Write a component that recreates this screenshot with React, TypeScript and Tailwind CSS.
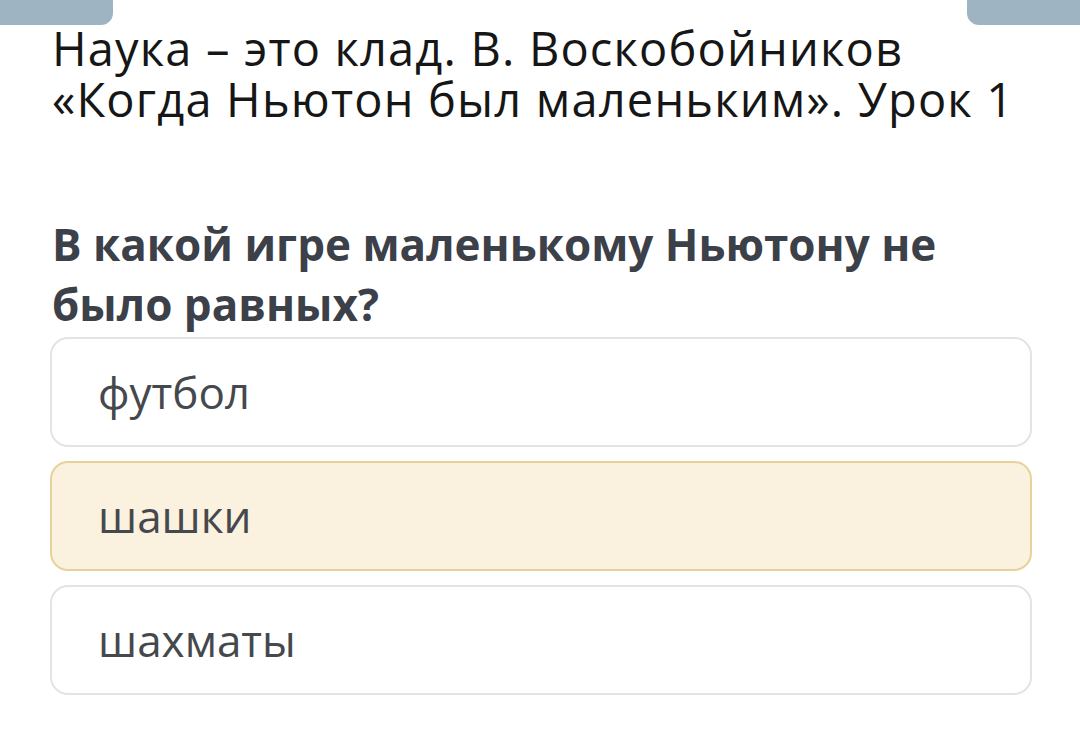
export default function App() {
  const options = [
    { text: "футбол", selected: false },
    { text: "шашки", selected: true },
    { text: "шахматы", selected: false },
  ];
  return (
    <div
      className="w-[1080px] h-[744px] bg-white overflow-hidden"
      style={{ fontFamily: '"Open Sans", "Noto Sans", sans-serif' }}
    >
      <div className="flex justify-between h-[25px]">
        <div className="w-[113px] h-[25px] bg-[#9fb4c2] rounded-br-[12px]" />
        <div className="w-[113px] h-[25px] bg-[#9fb4c2] rounded-bl-[12px]" />
      </div>
      <div className="pl-[52px] pr-[20px]">
        <h1 className="text-[47px] leading-[51px] tracking-[0.025em] text-[#161616] font-normal -mt-[2px] whitespace-nowrap">
          Наука – это клад. В. Воскобойников
          <br />
          «Когда Ньютон был маленьким». Урок 1
        </h1>
        <h2 className="mt-[89px] text-[44px] leading-[60px] font-bold text-[#3c4049] whitespace-nowrap">
          В какой игре маленькому Ньютону не
          <br />
          было равных?
        </h2>
      </div>
      <div className="mt-[3px] pl-[50px] pr-[48px] flex flex-col gap-[14px]">
        {options.map((o) => (
          <div
            key={o.text}
            className={
              o.selected
                ? "h-[110px] rounded-[18px] border-2 border-[#e8d29a] bg-[#faf1df] flex items-center pl-[46px]"
                : "h-[110px] rounded-[18px] border-2 border-[#e4e4e4] bg-white flex items-center pl-[46px]"
            }
          >
            <span className="text-[44px] text-[#45484d] leading-none">{o.text}</span>
          </div>
        ))}
      </div>
    </div>
  );
}
